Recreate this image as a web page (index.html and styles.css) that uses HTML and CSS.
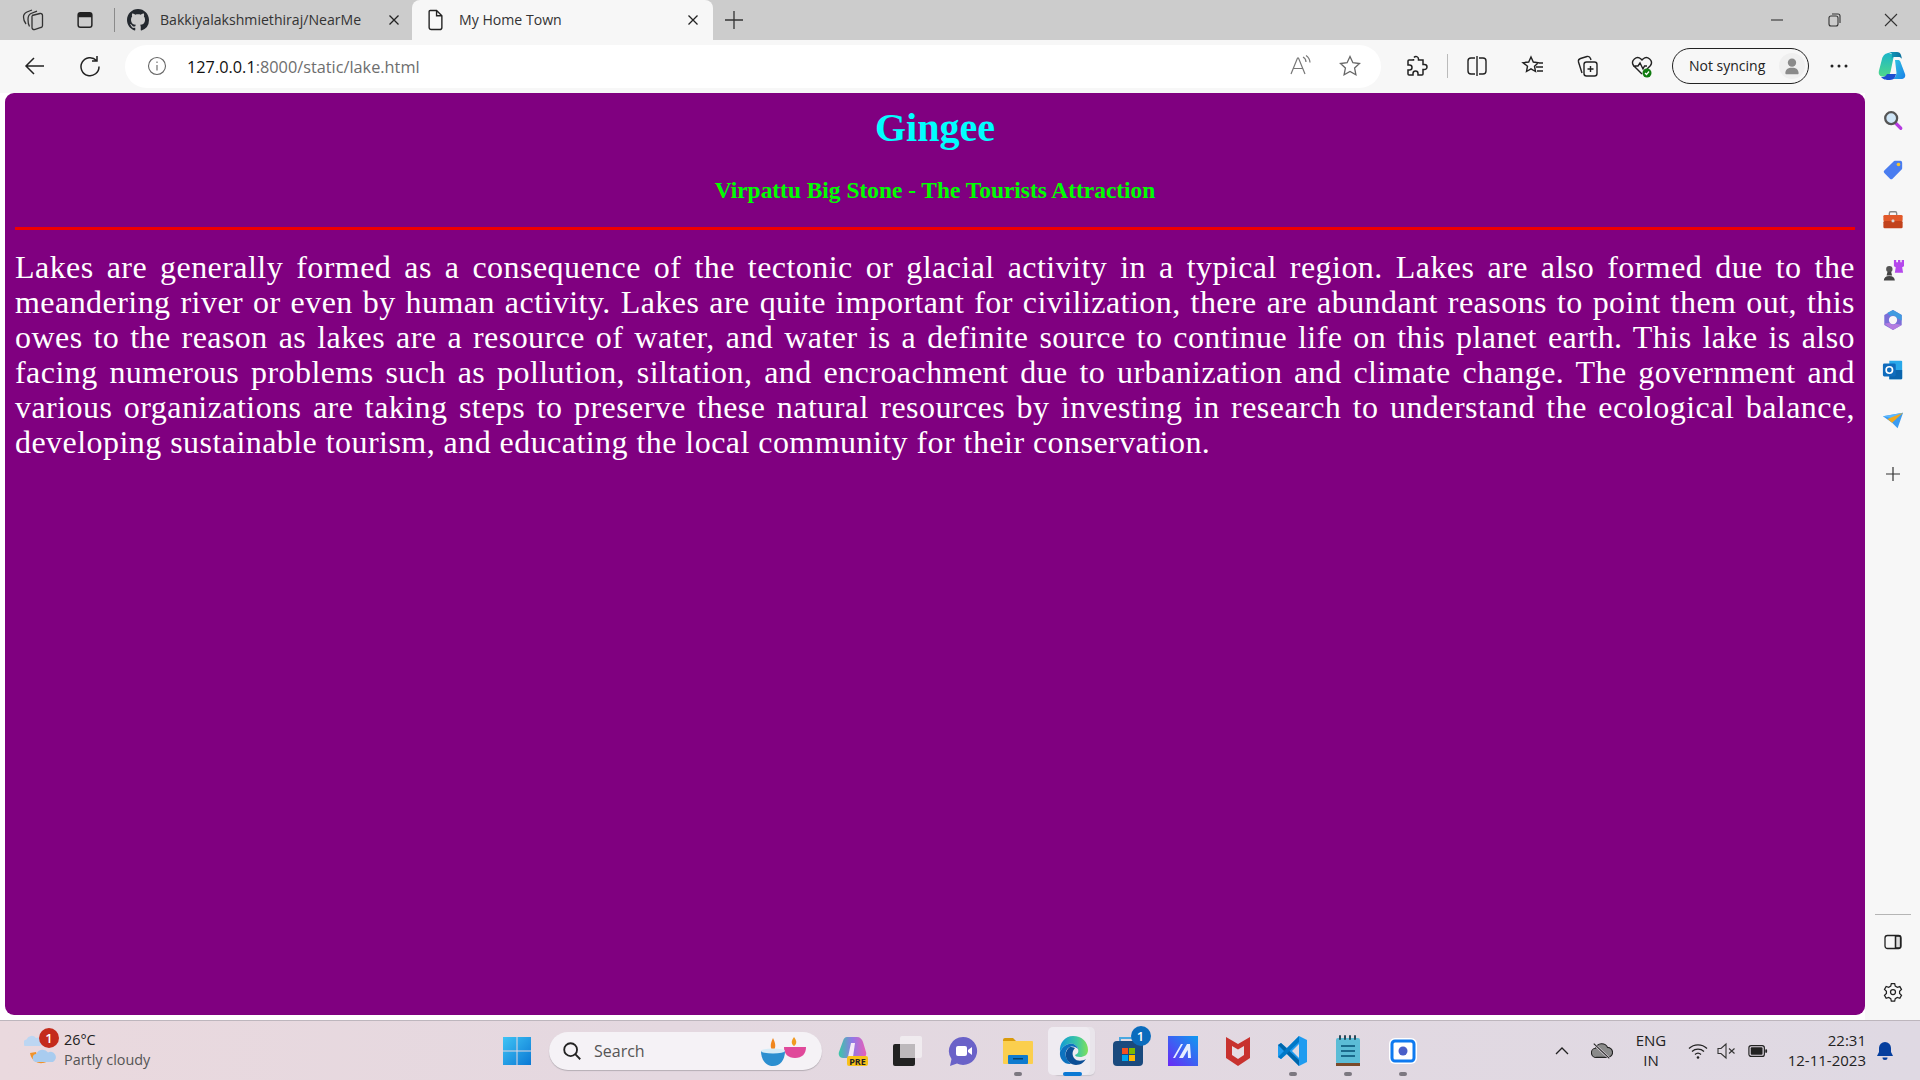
FILE: index.html
```html
<!DOCTYPE html>
<html lang="en">
<head>
<meta charset="utf-8">
<title>My Home Town</title>
<link rel="stylesheet" href="styles.css">
</head>
<body>
<div class="app">
  <header class="tabbar">
    <span class="tb-btn first"><svg class="ic22" viewBox="0 0 22 22" fill="none" stroke="#333" stroke-width="1.300"><path d="M10 6.500l8-2a2 2 0 0 1 2.500 2v10a2 2 0 0 1-1.500 2l-6.500 2a2 2 0 0 1-2.500-2V8.500a2 2 0 0 1 .5-2z"/><path d="M7.500 17.500C6.500 16 6 13 6 10.500 6 7.500 7 5.500 9 4.500l6-2.300"/><path d="M4 15C2 12.500 1.500 10 1.500 8c0-2.500 1.500-4 3.500-5l5-2"/></svg></span>
    <span class="tb-btn"><svg class="ic22" viewBox="0 0 24 24"><rect x="4.500" y="4" width="15" height="16" rx="2.500" fill="none" stroke="#222" stroke-width="1.600"/><path d="M4.500 6.500a2.500 2.500 0 0 1 2.500-2.500h10a2.500 2.500 0 0 1 2.500 2.500V9h-15z" fill="#222"/></svg></span>
    <span class="tab-sep"></span>
    <div class="tab">
      <svg class="gh" viewBox="0 0 16 16"><path fill="#24292f" d="M8 0C3.58 0 0 3.58 0 8c0 3.540 2.290 6.530 5.470 7.590.4.070.55-.17.55-.38 0-.19-.01-.82-.01-1.490-2.010.37-2.530-.49-2.690-.94-.09-.23-.48-.94-.82-1.130-.28-.15-.68-.52-.01-.53.63-.01 1.080.58 1.230.82.72 1.210 1.870.87 2.330.66.07-.52.28-.87.51-1.070-1.780-.2-3.640-.89-3.640-3.950 0-.87.31-1.590.82-2.150-.08-.2-.36-1.020.08-2.120 0 0 .67-.21 2.200.82.64-.18 1.320-.27 2-.27.68 0 1.360.09 2 .27 1.530-1.040 2.200-.82 2.200-.82.44 1.100.16 1.920.08 2.120.51.56.82 1.270.82 2.150 0 3.070-1.870 3.750-3.650 3.950.29.25.54.73.54 1.480 0 1.070-.01 1.930-.01 2.200 0 .21.15.46.55.38A8.013 8.013 0 0 0 16 8c0-4.420-3.580-8-8-8z"/></svg>
      <span class="tab-title">Bakkiyalakshmiethiraj/NearMe</span>
      <svg class="tab-x" viewBox="0 0 12 12"><path d="M1.500 1.500l9 9M10.500 1.500l-9 9" stroke="#222" stroke-width="1.300" fill="none"/></svg>
    </div>
    <div class="tab active">
      <svg class="doc" viewBox="0 0 16 20" fill="none" stroke="#222" stroke-width="1.300"><path d="M3 1h6l5 5v11a2 2 0 0 1-2 2H4a2 2 0 0 1-2-2V2a1 1 0 0 1 1-1zM9 1v5h5"/></svg>
      <span class="tab-title">My Home Town</span>
      <svg class="tab-x" viewBox="0 0 12 12"><path d="M1.500 1.500l9 9M10.500 1.500l-9 9" stroke="#222" stroke-width="1.300" fill="none"/></svg>
    </div>
    <svg class="tab-plus" viewBox="0 0 20 20"><path d="M10 1v18M1 10h18" stroke="#333" stroke-width="1.300"/></svg>
    <div class="win-ctrls">
      <svg class="ic16" viewBox="0 0 16 16"><path d="M2 8h12" stroke="#333" stroke-width="1.100"/></svg>
      <svg class="ic16" viewBox="0 0 16 16" fill="none" stroke="#333" stroke-width="1.100"><rect x="3" y="4" width="9" height="10" rx="2"/><path d="M6 2h6a2 2 0 0 1 2 2v7"/></svg>
      <svg class="ic16" viewBox="0 0 16 16"><path d="M2 2l12 12M14 2L2 14" stroke="#333" stroke-width="1.100"/></svg>
    </div>
  </header>

  <nav class="toolbar">
    <svg class="nav-back" viewBox="0 0 24 24" fill="none" stroke="#222" stroke-width="1.500"><path d="M21 12H3M11 4l-8 8 8 8"/></svg>
    <svg class="nav-reload" viewBox="0 0 24 24" fill="none" stroke="#222" stroke-width="1.500"><path d="M18.500 6.500A9 9 0 1 0 21 12.500M19 2v5h-5"/></svg>
    <div class="address">
      <svg class="info" viewBox="0 0 20 20" fill="none" stroke="#666" stroke-width="1.100"><circle cx="10" cy="10" r="8.500"/><path d="M10 9v5.500M10 5.500v1.500"/></svg>
      <span class="url"><span class="url-host">127.0.0.1</span>:8000/static/lake.html</span>
      <span class="addr-right">
        <svg class="ic24" viewBox="0 0 24 24" fill="none" stroke="#777" stroke-width="1.200"><path d="M3 20L9.500 4h1L17 20M5.500 14.500h9.500M15 3a6 6 0 0 1 3 5M18 1.500a9 9 0 0 1 4 7"/></svg>
        <svg class="ic24" viewBox="0 0 24 24" fill="none" stroke="#666" stroke-width="1.300"><path d="M12 2.500l2.900 6.200 6.600.8-4.900 4.600 1.300 6.700L12 17.500l-5.900 3.300 1.300-6.700-4.900-4.600 6.600-.8z"/></svg>
      </span>
    </div>
    <div class="tools">
      <svg class="ic24 t-ext" viewBox="0 0 24 24" fill="none" stroke="#222" stroke-width="1.500"><path d="M10 3.500a2.500 2.500 0 0 1 4.500 1.500v1H19v4.500h1.500a2.500 2.500 0 0 1 0 5H19V20a1 1 0 0 1-1 1h-4v-1.500a2.500 2.500 0 0 0-5 0V21H5a1 1 0 0 1-1-1v-4h1.500a2.500 2.500 0 0 0 0-5H4V7a1 1 0 0 1 1-1h4.500V5"/></svg>
      <span class="t-sep"></span>
      <svg class="ic24 t-split" viewBox="0 0 24 24" fill="none" stroke="#222" stroke-width="1.400"><path d="M10 4H6a3 3 0 0 0-3 3v10a3 3 0 0 0 3 3h4M14 4h4a3 3 0 0 1 3 3v10a3 3 0 0 1-3 3h-4M12 2v20"/></svg>
      <svg class="ic24 t-fav" viewBox="0 0 24 24" fill="none" stroke="#222" stroke-width="1.400"><path d="M10 3l2.300 5 5 .7-3.800 3.500 1 5.300-4.500-2.600-4.500 2.600 1-5.300L2 8.700 7.700 8zM15 13h7M16 17h6M18 9h4"/></svg>
      <svg class="ic24 t-coll" viewBox="0 0 24 24" fill="none" stroke="#222" stroke-width="1.400"><rect x="9" y="8" width="13" height="14" rx="2.500"/><path d="M15.500 12v6M12.500 15h6M7 19L3.500 8a3 3 0 0 1 2-3.500L12 2.500a3 3 0 0 1 3.500 2L16 6"/></svg>
      <svg class="ic24 t-health" viewBox="0 0 24 24"><path d="M12 20L3.500 11.500A5 5 0 0 1 11 5l1 1 1-1a5 5 0 0 1 7.500 6.500L17 15M3 12h5l2-3 3 6 1.500-3H17" fill="none" stroke="#222" stroke-width="1.400"/><circle cx="17" cy="19" r="4.500" fill="#107c10"/><path d="M15 19l1.500 1.500 2.500-3" fill="none" stroke="#fff" stroke-width="1.200"/></svg>
      <div class="sync"><span class="sync-label">Not syncing</span><span class="avatar"><svg viewBox="0 0 24 24"><circle cx="12" cy="8" r="5" fill="#8a8a8a"/><path d="M4 21c0-5 3-7 8-7s8 2 8 7a2 2 0 0 1-2 1H6a2 2 0 0 1-2-1z" fill="#8a8a8a"/></svg></span></div>
      <svg class="ic24 t-dots" viewBox="0 0 24 24"><circle cx="5" cy="12" r="1.500" fill="#222"/><circle cx="12" cy="12" r="1.500" fill="#222"/><circle cx="19" cy="12" r="1.500" fill="#222"/></svg>
      <svg class="copilot" viewBox="0 0 28 30"><defs><linearGradient id="cpA" x1="0" y1="0" x2="1" y2="1"><stop offset="0" stop-color="#2fc6e0"/><stop offset="1" stop-color="#1a7fe8"/></linearGradient><linearGradient id="cpB" x1="0" y1="0" x2="0" y2="1"><stop offset="0" stop-color="#1bb5c9"/><stop offset="1" stop-color="#4fd98a"/></linearGradient><linearGradient id="cpC" x1="0" y1="0" x2="1" y2="0"><stop offset="0" stop-color="#12a5c0"/><stop offset="1" stop-color="#0c6f9c"/></linearGradient></defs><path d="M17 9h3c1 0 2 .6 2.500 2L27 23c1 3-1 5-4 5h-8c2-1 3-3 3.500-6z" fill="url(#cpA)"/><path d="M16 4 12.500 21c-.7 3-3 4.500-6 4.500H5c-3 0-5-2-4-6L4 8c1-4 4-6 7-6z" fill="url(#cpB)"/><path d="M9 1h10c2 0 3.500 1 4 3l1 4c-1-1.500-2-2-3.500-2H17c-2 0-3 .5-3.500 3L14 4c.3-2-2-3-5-3z" fill="url(#cpC)"/><path d="M9 23h9c-.5 3-2 6-6 6-4 0-6 0-9-3 3 .5 5-1 6-3z" fill="#1d4fd0"/></svg>
    </div>
  </nav>

  <div class="main">
    <main class="page">
      <h1 class="title">Gingee</h1>
      <h3 class="subtitle">Virpattu Big Stone - The Tourists Attraction</h3>
      <hr class="rule">
      <p class="body-text">Lakes are generally formed as a consequence of the tectonic or glacial activity in a typical region. Lakes are also formed due to the meandering river or even by human activity. Lakes are quite important for civilization, there are abundant reasons to point them out, this owes to the reason as lakes are a resource of water, and water is a definite source to continue life on this planet earth. This lake is also facing numerous problems such as pollution, siltation, and encroachment due to urbanization and climate change. The government and various organizations are taking steps to preserve these natural resources by investing in research to understand the ecological balance, developing sustainable tourism, and educating the local community for their conservation.</p>
    </main>
    <aside class="sidebar">
      <span class="side-slot first-slot"><svg class="ic22" viewBox="0 0 24 24"><path d="M14.500 15l6 6" stroke="#b63be0" stroke-width="3.500" stroke-linecap="round"/><circle cx="10" cy="10" r="6.500" fill="#cfe6f7" stroke="#555" stroke-width="2.500"/></svg></span>
      <span class="side-slot"><svg class="ic22" viewBox="0 0 24 24"><path d="M14 2h6a2 2 0 0 1 2 2v6a2 2 0 0 1-.6 1.400L11.500 21.500a2 2 0 0 1-2.800 0L2.500 15.300a2 2 0 0 1 0-2.800L12.600 2.600A2 2 0 0 1 14 2z" fill="#4a7df0"/><circle cx="18" cy="6" r="2" fill="#f5c32c"/></svg></span>
      <span class="side-slot"><svg class="ic22" viewBox="0 0 24 24"><path d="M8 7V4.500A1.500 1.500 0 0 1 9.500 3h5A1.500 1.500 0 0 1 16 4.500V7" fill="none" stroke="#888" stroke-width="1.500"/><rect x="1.500" y="6.500" width="21" height="7" rx="1.500" fill="#e2592a"/><rect x="1.500" y="13" width="21" height="8" rx="1.500" fill="#c2421c"/><rect x="10.500" y="11.500" width="3" height="3" rx="1" fill="#d8d8d8"/></svg></span>
      <span class="side-slot"><svg class="ic22" viewBox="0 0 24 24"><circle cx="8" cy="11" r="3.500" fill="#555"/><path d="M6 14h4l1 4H5zM2 23.500c0-3 2-5 6-5s6 2 6 5z" fill="#444"/><path d="M13 1h2.500v2.500h2V1h2.500v2.500h1.500V1H24v7l-2 1 1 6H14l1-6-2-1z" fill="#b548ec"/></svg></span>
      <span class="side-slot"><svg class="ic22" viewBox="0 0 24 24"><path d="M12 1l9.500 5.500v11L12 23l-9.500-5.500v-11z" fill="#7b6fd8"/><path d="M12 1l9.500 5.500v6L16 10c-1-2-2.500-3-4-3-1 0-2 .3-3 1L6 4z" fill="#3f9be0"/><path d="M2.500 16l6-1c1 1.500 2 2 3.500 2 1 0 2-.3 3-1l6.500 1.500L12 23z" fill="#b47ce0"/><circle cx="12" cy="12" r="4.500" fill="#f7f7f7"/></svg></span>
      <span class="side-slot"><svg class="ic22" viewBox="0 0 24 24"><path d="M8 2h13a1 1 0 0 1 1 1v18a1 1 0 0 1-1 1H8z" fill="#28a8ea"/><path d="M8 12h14v9a1 1 0 0 1-1 1H8z" fill="#0a64ad"/><rect x="1" y="5" width="14" height="14" rx="1.500" fill="#0f6cbd"/><circle cx="8" cy="12" r="3.500" fill="none" stroke="#fff" stroke-width="1.800"/></svg></span>
      <span class="side-slot"><svg class="ic22" viewBox="0 0 24 24"><path d="M1 8l22-4-6 17-6-6z" fill="#3b9cf2"/><path d="M1 8l22-4-12 6z" fill="#5cb8ff"/><path d="M6 11L23 4 11 15z" fill="#f3a81d"/></svg></span>
      <span class="side-slot side-add"><svg class="ic16" viewBox="0 0 16 16"><path d="M8 1v14M1 8h14" stroke="#333" stroke-width="1.200"/></svg></span>
      <span class="side-spacer"></span>
      <span class="side-sep"></span>
      <span class="side-slot"><svg class="ic20" viewBox="0 0 20 20" fill="none" stroke="#222" stroke-width="1.300"><rect x="2" y="3.500" width="16" height="13" rx="2.500"/><path d="M12.500 3.500v13"/><path d="M12.500 4h3.500a1.500 1.500 0 0 1 1.500 1.500v9a1.500 1.500 0 0 1-1.500 1.500h-3.500z" fill="#222" fill-opacity=".12"/></svg></span>
      <span class="side-slot"><svg class="ic20" viewBox="0 0 24 24" fill="none" stroke="#222" stroke-width="1.500"><circle cx="12" cy="12" r="3"/><path d="M10 2h4l.7 3 2.500 1.400 3-.9 2 3.500-2.300 2.100v2.800l2.300 2.100-2 3.500-3-.9-2.500 1.400-.7 3h-4l-.7-3-2.500-1.400-3 .9-2-3.500 2.300-2.100V11l-2.300-2.100 2-3.500 3 .9L9.300 5z"/></svg></span>
    </aside>
  </div>

  <footer class="taskbar">
    <div class="weather">
      <span class="weather-icon">
        <svg viewBox="0 0 32 36"><path d="M6 20c1 7 7 11 13 10 3-.4 5-2 6-3-7 1-12-2-13-8z" fill="#f0932b"/><path d="M1 13a3.500 3.500 0 0 1 1.500-6.500A5.500 5.500 0 0 1 12 5a4 4 0 0 1 4 8z" fill="#bcd6f2"/><path d="M13 29a4 4 0 0 1-.5-8A6.500 6.500 0 0 1 24 19.500a5 5 0 0 1 5 9.500z" fill="#a9ccef"/></svg>
        <span class="badge-red">1</span>
      </span>
      <span class="weather-text"><span class="w-temp">26°C</span><span class="w-desc">Partly cloudy</span></span>
    </div>
    <svg class="win-logo" viewBox="0 0 30 30"><defs><linearGradient id="win" x1="0" y1="0" x2="1" y2="1"><stop offset="0" stop-color="#3fc4f5"/><stop offset="1" stop-color="#0b78d4"/></linearGradient></defs><path fill="url(#win)" d="M1 1h13.500v13.500H1zM15.500 1H29v13.500H15.500zM1 15.500h13.500V29H1zM15.500 15.500H29V29H15.500z"/></svg>
    <div class="search">
      <svg class="ic22" viewBox="0 0 24 24" fill="none" stroke="#222" stroke-width="2"><circle cx="10.500" cy="10.500" r="7"/><path d="M15.500 15.500L21 21"/></svg>
      <span class="search-text">Search</span>
      <svg class="diyas" viewBox="0 0 56 32"><path d="M38 2c3 4 3 7 0 9-3-2-3-5 0-9z" fill="#f19a1f"/><path d="M28 12h22c0 7-4 11-11 11s-11-4-11-11z" fill="#e0489a"/><path d="M17 3c3 6 3 10 0 13-3-3-3-7 0-13z" fill="#f0861e"/><path d="M5 16h24c0 9-5 15-12 15S5 25 5 16z" fill="#2c8fd0"/><ellipse cx="17" cy="16" rx="12" ry="2.500" fill="#d6ecf7"/></svg>
    </div>
    <div class="pins">
      <span class="pin"><svg class="ic32" viewBox="0 0 32 32"><defs><linearGradient id="cp2" x1="0" y1="0" x2="1" y2="0"><stop offset="0" stop-color="#37c8a6"/><stop offset=".5" stop-color="#9277e6"/><stop offset="1" stop-color="#e85fb8"/></linearGradient></defs><path d="M10 2h10c3 0 5 2 6 5l3 10c1 3-1 6-4 6H6c-3 0-5-3-4-6l4-11c1-3 2-4 4-4z" fill="url(#cp2)"/><path d="M14 8h4l-2 14h-5z" fill="#f4e9f7"/><rect x="10" y="21" width="21" height="10" rx="2" fill="#f7c21a"/><text x="20.500" y="29.500" class="pre">PRE</text></svg></span>
      <span class="pin"><svg class="ic32" viewBox="0 0 32 32"><rect x="1" y="9" width="22" height="22" rx="2" fill="#222"/><rect x="8" y="1" width="22" height="22" rx="2" fill="#f2f0f2" fill-opacity=".8"/><rect x="8" y="9" width="15" height="14" fill="#bdb9bc"/></svg></span>
      <span class="pin"><svg class="ic32" viewBox="0 0 32 32"><path d="M16 2a14 14 0 1 1-6 26.600L3 31l1.500-7A14 14 0 0 1 16 2z" fill="#6a62c8"/><rect x="9" y="11" width="11" height="10" rx="2" fill="#fff"/><path d="M21 15l4-3v8l-4-3z" fill="#fff"/></svg></span>
      <span class="pin has-dot"><svg class="ic32" viewBox="0 0 32 32"><path d="M1 5a2 2 0 0 1 2-2h8l3 3h-13z" fill="#d99a0b"/><path d="M1 6h29a1 1 0 0 1 1 1v21a1 1 0 0 1-1 1H2a1 1 0 0 1-1-1z" fill="#fbcf4e"/><rect x="6" y="20" width="20" height="9" rx="1" fill="#0f7bcf"/><rect x="11" y="23" width="10" height="1.500" fill="#07426f"/></svg></span>
      <span class="pin edge-pin"><svg class="ic32" viewBox="0 0 32 32"><defs><linearGradient id="eg1" x1="0" y1="0" x2="1" y2="0"><stop offset="0" stop-color="#0f9ad6"/><stop offset=".6" stop-color="#3cc6a4"/><stop offset="1" stop-color="#7fe05a"/></linearGradient></defs><path d="M16 1c9 0 15 6 15 14 0 5-4 7-8 7-3 0-5-1-5-2 3-1 4-3 3-6-1-4-5-6-9-5C7 10 4 14 3 17 2 8 8 1 16 1z" fill="url(#eg1)"/><path d="M3 17c1-3 4-7 9-8 4-1 8 1 9 5-2-2-5-3-8-2-4 2-5 6-4 10 1 3 3 5 5 7C8 30 2 24 3 17z" fill="#0c72bf"/><path d="M13 12c-3 2-5 6-4 10 1 4 5 8 10 8 5 0 8-3 10-6-3 2-9 3-12-1-2-3-2-7 1-10-2-1-3-1-5-1z" fill="#0c4f96"/></svg><span class="edge-bar"></span></span>
      <span class="pin"><span class="store"><svg class="ic32" viewBox="0 0 32 32"><path d="M8 7V3h14v4" fill="none" stroke="#4aa8e0" stroke-width="2"/><rect x="1" y="6" width="30" height="25" rx="4" fill="#1a4a7e"/><rect x="10" y="13" width="6" height="6" fill="#f25022"/><rect x="17" y="13" width="6" height="6" fill="#7fba00"/><rect x="10" y="20" width="6" height="6" fill="#00a4ef"/><rect x="17" y="20" width="6" height="6" fill="#ffb900"/></svg><span class="badge-blue">1</span></span></span>
      <span class="pin"><svg class="ic32" viewBox="0 0 32 32"><defs><linearGradient id="mm" x1="1" y1="0" x2="0" y2="1"><stop offset="0" stop-color="#0f9af0"/><stop offset="1" stop-color="#6a28f5"/></linearGradient></defs><rect x="1" y="1" width="30" height="30" fill="url(#mm)"/><path d="M6 23l8-14h2l-8 14zM12 23l8-14h3l1 14h-3l-.3-8-4.700 8z" fill="#e6eeff"/></svg></span>
      <span class="pin"><svg class="ic32" viewBox="0 0 32 32"><path d="M4 2l12 7 12-7v21l-12 8-12-8z" fill="#c8322f"/><path d="M10 11l6 3.500 6-3.500v9l-6 4-6-4z" fill="#e6dde4"/></svg></span>
      <span class="pin has-dot"><svg class="ic32" viewBox="0 0 32 32"><path d="M22 1l8 4v22l-8 4-12-12-6 5-3-2V10l3-2 6 5z" fill="#1f9cf0"/><path d="M22 9l-7 7 7 7z" fill="#e0dae2"/><path d="M1 10l3-2 18 17v6z" fill="#0065a9"/><path d="M1 22l3 2L22 7V1z" fill="#0078c8"/></svg></span>
      <span class="pin has-dot"><svg class="ic32" viewBox="0 0 32 32"><rect x="4" y="3" width="24" height="26" rx="2" fill="#5bbcd6"/><rect x="4" y="28" width="24" height="3" fill="#7a4a2a"/><path d="M9 11h14M9 16h14M9 21h14" stroke="#1a6a8c" stroke-width="2"/><path d="M8 1v3M13 1v3M18 1v3M23 1v3" stroke="#274a5a" stroke-width="2" stroke-linecap="round"/></svg></span>
      <span class="pin has-dot"><svg class="ic32" viewBox="0 0 32 32"><rect x="2" y="3" width="28" height="26" rx="6" fill="#fff"/><rect x="5" y="6" width="22" height="20" rx="3" fill="none" stroke="#0f7af0" stroke-width="3"/><circle cx="16" cy="16" r="4.500" fill="#4a5fc8"/></svg></span>
    </div>
    <div class="tray">
      <svg class="ic16 tray-chev" viewBox="0 0 16 16" fill="none" stroke="#222" stroke-width="1.300"><path d="M2 11l6-6 6 6"/></svg>
      <svg class="ic22 tray-cloud" viewBox="0 0 24 24"><path d="M6 19a5 5 0 0 1-1-10 7 7 0 0 1 13-1 5.500 5.500 0 0 1 0 11z" fill="#8a8a8a" stroke="#222" stroke-width="1.200"/><path d="M4 5l16 15" stroke="#e3dae4" stroke-width="2.500"/><path d="M3 4l17 16" stroke="#222" stroke-width="1.200"/></svg>
      <span class="lang"><span>ENG</span><span>IN</span></span>
      <svg class="ic20 tray-wifi" viewBox="0 0 20 20" fill="none" stroke="#222" stroke-width="1.300"><path d="M1 7.500a13 13 0 0 1 18 0M4 10.500a9 9 0 0 1 12 0M7 13.500a4.500 4.500 0 0 1 6 0"/><circle cx="10" cy="16.500" r="1.300" fill="#222" stroke="none"/></svg>
      <svg class="ic20 tray-vol" viewBox="0 0 20 20" fill="none" stroke="#333" stroke-width="1.100"><path d="M1 7.500v5h3l5 4.500V3L4 7.500zM12 7.500l5.500 5M17.500 7.500l-5.500 5"/></svg>
      <svg class="ic20 tray-bat" viewBox="0 0 22 20"><rect x="1" y="4" width="17" height="12" rx="2.500" fill="none" stroke="#222" stroke-width="1.300"/><rect x="3" y="6" width="13" height="8" rx="1" fill="#222"/><rect x="19" y="8" width="2" height="4" rx="1" fill="#222"/></svg>
      <span class="clock"><span>22:31</span><span>12-11-2023</span></span>
      <svg class="ic20 tray-bell" viewBox="0 0 20 20"><path d="M10 1a6 6 0 0 1 6 6v4l2 4H2l2-4V7a6 6 0 0 1 6-6z" fill="#063f9e"/><path d="M7.500 16.500h5a2.500 2.500 0 0 1-5 0z" fill="#063f9e"/></svg>
    </div>
  </footer>
</div>
</body>
</html>
```

FILE: styles.css
```css
* { box-sizing: border-box; }
html, body { margin: 0; height: 100%; overflow: hidden; }
body { font-family: "Open Sans", "Noto Sans", sans-serif; color: #222; }
svg { display: block; flex: none; }
.ic16 { width: 16px; height: 16px; }
.ic20 { width: 20px; height: 20px; }
.ic22 { width: 22px; height: 22px; }
.ic24 { width: 24px; height: 24px; }
.ic32 { width: 32px; height: 32px; }

.app { height: 1080px; display: flex; flex-direction: column; background: #f7f7f7; }

/* tab strip */
.tabbar { height: 40px; flex: none; background: #cccccc; display: flex; align-items: center; }
.tb-btn { width: 52px; display: flex; justify-content: center; }
.tb-btn.first { margin-left: 7px; }
.tab-sep { width: 1px; height: 24px; background: #8a8a8a; margin-left: 3px; }
.tab { width: 297px; height: 40px; display: flex; align-items: center; }
.tab .gh { width: 22px; height: 22px; margin-left: 12px; }
.tab-title { font-size: 14.1px; margin-left: 11px; padding-bottom: 2px; flex: 1; white-space: nowrap; color: #333; }
.tab-x { width: 12px; height: 12px; margin-right: 12px; }
.tab.active { width: 301px; background: #f7f7f7; border-radius: 8px 8px 0 0; }
.tab.active .doc { width: 17px; height: 22px; margin-left: 15px; }
.tab.active .tab-title { margin-left: 15px; }
.tab.active .tab-x { margin-right: 14px; }
.tab-plus { width: 20px; height: 20px; margin-left: 11px; }
.win-ctrls { margin-left: auto; width: 173px; display: flex; justify-content: space-between; padding: 0 21px 0 22px; }

/* address toolbar */
.toolbar { height: 53px; flex: none; display: flex; align-items: center; padding-bottom: 1px; }
.nav-back { width: 24px; height: 24px; margin-left: 23px; }
.nav-reload { width: 24px; height: 24px; margin-left: 31px; }
.address { width: 1256px; height: 43px; margin-left: 23px; background: #fff; border-radius: 22px; display: flex; align-items: center; }
.info { width: 20px; height: 20px; margin-left: 22px; }
.url { font-size: 16.3px; color: #6e6e6e; margin-left: 20px; padding-top: 2px; }
.url-host { color: #111; }
.addr-right { margin-left: auto; display: flex; gap: 26px; padding-right: 19px; }
.tools { display: flex; align-items: center; flex: 1; }
.t-ext { margin-left: 23px; }
.t-sep { width: 1px; height: 24px; background: #bbb; margin-left: 19px; }
.t-split { margin-left: 17px; }
.t-fav { margin-left: 32px; }
.t-coll { margin-left: 30px; }
.t-health { margin-left: 31px; }
.sync { width: 137px; height: 36px; margin-left: 18px; border: 1.5px solid #222; border-radius: 18px; display: flex; align-items: center; justify-content: space-between; padding: 0 3px 0 16px; }
.sync-label { font-size: 14px; white-space: nowrap; color: #222; padding-bottom: 2px; }
.avatar { width: 26px; height: 26px; border-radius: 50%; background: #efefef; padding: 3px; }
.t-dots { margin-left: 18px; }
.copilot { width: 28px; height: 30px; margin-left: 27px; }

/* page */
.main { flex: 1; display: flex; min-height: 0; background: #fff; }
.page { width: 1860px; margin: 0 0 5px 5px; background: #800080; border-radius: 9px; padding: 8px 10px; overflow: hidden; }
.title { margin: 4px 0 0; font: bold 40px/46px "Liberation Serif", serif; color: #00ffff; text-align: center; }
.subtitle { margin: 26px 0 0; font: bold 23.4px/27px "Liberation Serif", serif; color: #00ff00; text-align: center; }
.rule { margin: 23px 0 0; border: 0; height: 3px; background: #f00000; }
.body-text { margin: 20px 0 0; font: 32px/35px "Liberation Serif", serif; letter-spacing: .45px; color: #fff; text-align: justify; }

/* sidebar */
.sidebar { flex: 1; background: #f7f7f7; display: flex; flex-direction: column; align-items: center; padding: 2px 0 3px; }
.side-slot { height: 50px; width: 100%; display: flex; align-items: center; justify-content: center; }
.side-add { margin-top: 4px; }
.side-spacer { flex: 1; }
.side-sep { width: 36px; height: 1px; background: #b5b5b5; margin-bottom: 2px; }

/* taskbar */
.taskbar { height: 60px; flex: none; border-top: 1px solid #bdb6bd; background: linear-gradient(90deg, #ead9de 0%, #e4d8e0 35%, #dfd9e3 100%); display: flex; align-items: center; }
.weather { width: 502px; display: flex; align-items: center; padding-left: 24px; flex: none; }
.weather-icon { position: relative; width: 32px; height: 36px; }
.badge-red { position: absolute; left: 15px; top: -5px; width: 20px; height: 20px; border-radius: 50%; background: #c42b1c; color: #fff; font-size: 13px; font-weight: 600; line-height: 20px; text-align: center; }
.weather-text { display: flex; flex-direction: column; margin-left: 8px; font-size: 14.4px; line-height: 20px; padding-bottom: 2px; }
.w-desc { color: #555; }
.win-logo { width: 30px; height: 30px; }
.search { width: 273px; height: 38px; margin-left: 17px; background: #f5f2f6; border-radius: 19px; box-shadow: 0 1px 1px #b5aeb5; display: flex; align-items: center; padding: 0 10px 0 12px; }
.search-text { font-size: 16px; color: #555; margin-left: 11px; }
.diyas { width: 56px; height: 32px; margin-left: auto; }
.pins { display: flex; flex: none; margin-left: 3px; }
.pin { width: 55px; height: 48px; display: flex; align-items: center; justify-content: center; position: relative; }
.pin.has-dot::after { content: ""; position: absolute; left: 23.500px; bottom: -1px; width: 8px; height: 4px; border-radius: 2px; background: #7c7880; }
.edge-pin { background: #efebf1; border-radius: 5px; box-shadow: 5px 0 0 #e9e5eb, 5px 1px 1px #c9c4cb; width: 42px; margin: 0 10px 0 3px; padding-left: 7px; }
.edge-bar { position: absolute; left: 15px; bottom: -1px; width: 19px; height: 4px; border-radius: 2px; background: #0b78d4; }
.store { position: relative; display: block; }
.badge-blue { position: absolute; right: -7px; top: -9px; width: 20px; height: 20px; border-radius: 50%; background: #0b6cbd; color: #fff; font-size: 13px; font-weight: 600; line-height: 20px; text-align: center; }
.pre { font: bold 9px "Open Sans", sans-serif; fill: #222; text-anchor: middle; }
.tray { flex: 1; display: flex; align-items: center; min-width: 0; }
.tray-chev { margin-left: 124px; }
.tray-cloud { margin-left: 21px; }
.lang { display: flex; flex-direction: column; align-items: center; width: 40px; margin-left: 18px; font-size: 15px; line-height: 20px; padding-bottom: 2px; }
.tray-wifi { margin-left: 17px; }
.tray-vol { margin-left: 9px; }
.tray-bat { margin-left: 11px; }
.clock { display: flex; flex-direction: column; align-items: flex-end; margin-left: auto; font-size: 15px; line-height: 20px; padding-bottom: 2px; }
.tray-bell { margin-left: 9px; margin-right: 25px; }
```
